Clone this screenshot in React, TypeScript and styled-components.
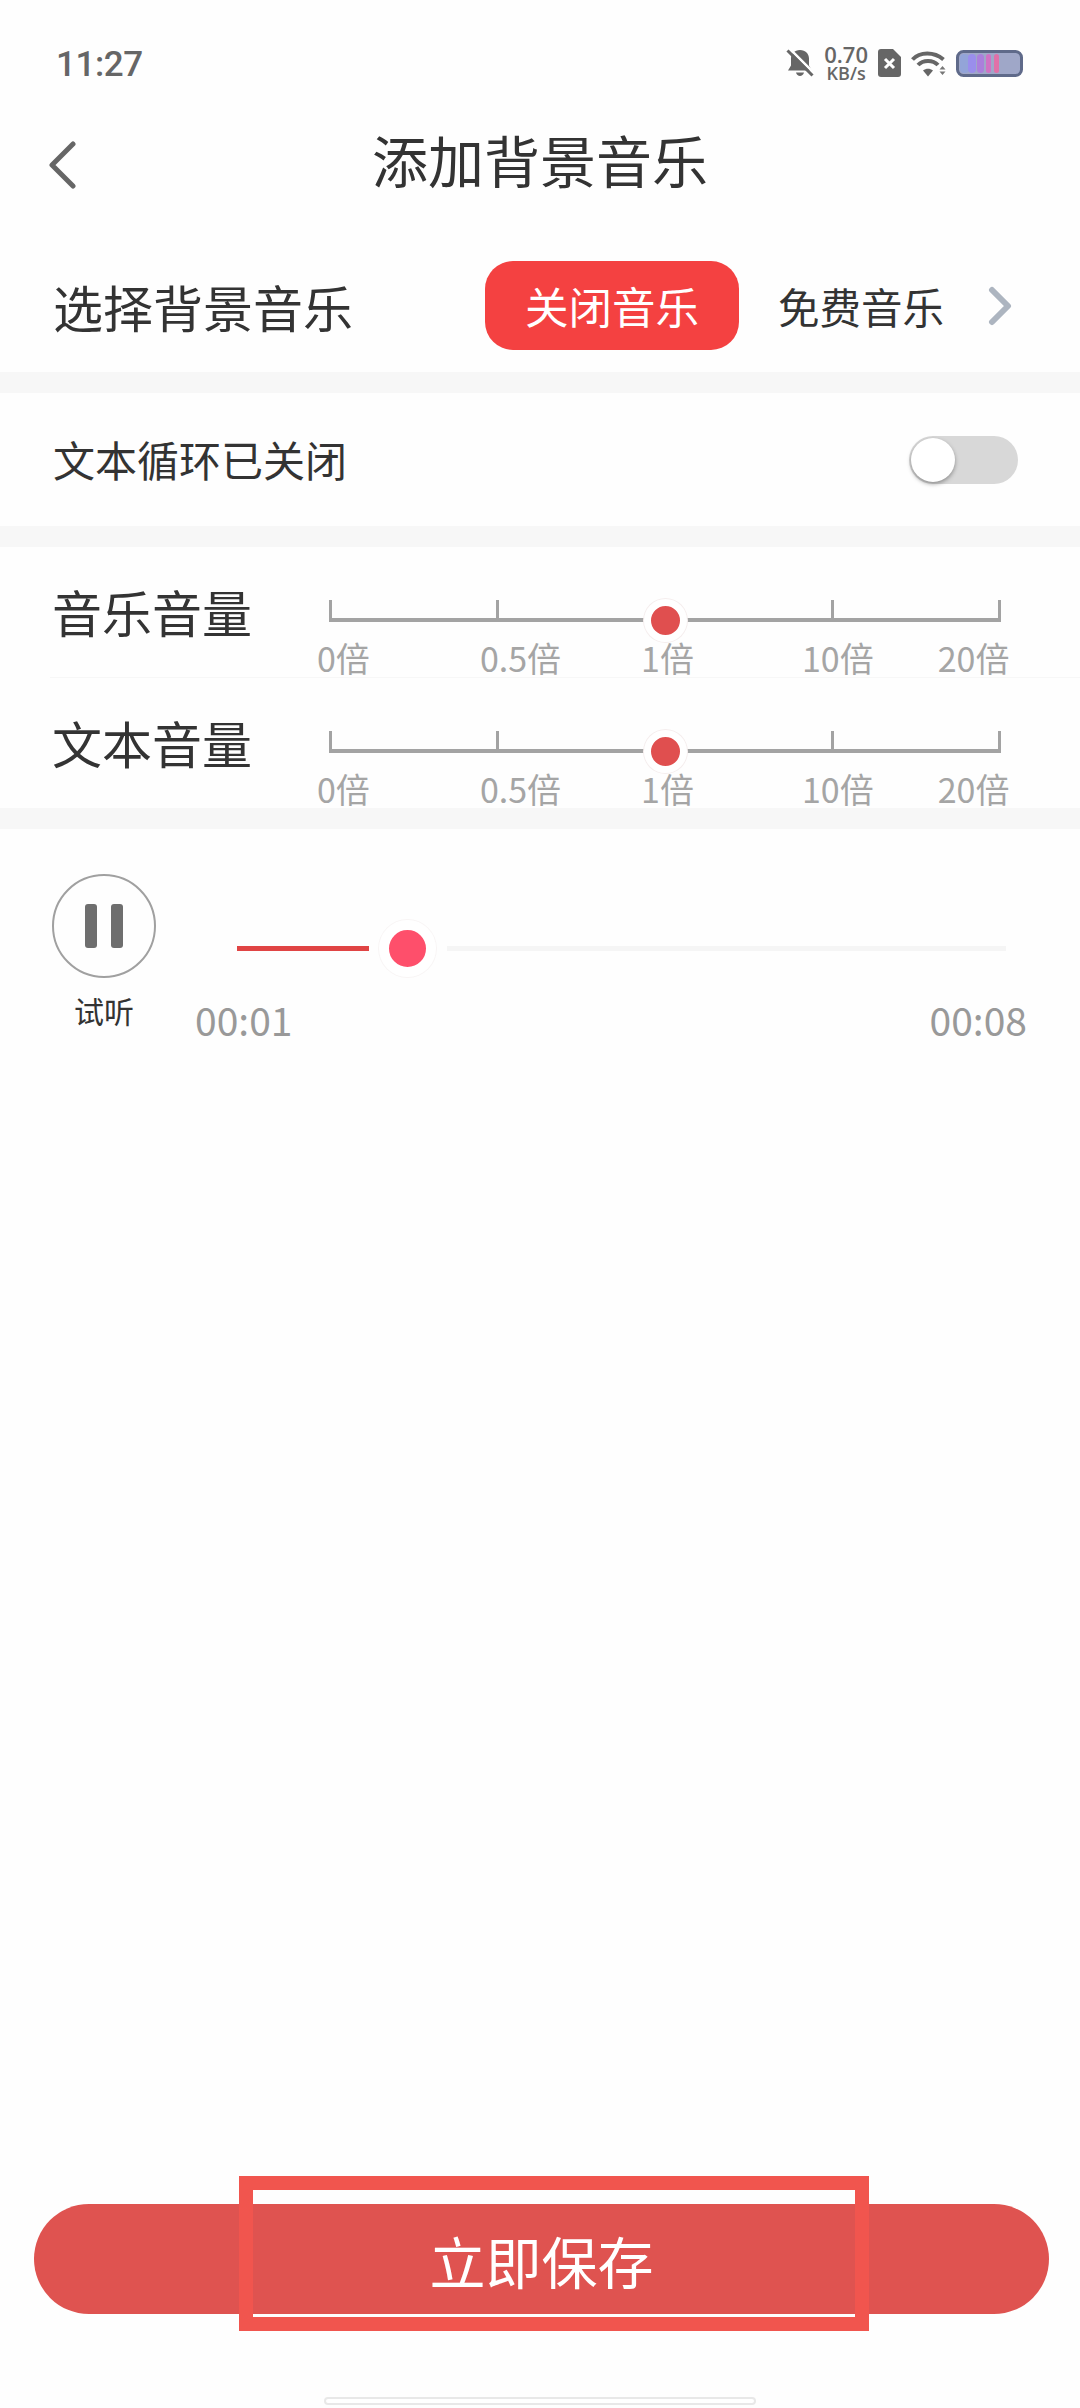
// App.tsx
import styled, { createGlobalStyle } from "styled-components";

const GlobalStyle = createGlobalStyle`
  html, body {
    margin: 0;
    padding: 0;
    background: #fefefe;
  }
  * {
    box-sizing: border-box;
  }
`;

const SCALE_LABELS = [
  { text: "0倍", gap: -1 },
  { text: "0.5倍", gap: 110 },
  { text: "1倍", gap: 80 },
  { text: "10倍", gap: 108 },
  { text: "20倍", gap: 64 },
];

const BellOff = () => (
  <svg width="28" height="28" viewBox="0 0 28 28">
    <path
      d="M14 1c5.500 0 9 3.800 9 8.500v7l3 5H2l3-5v-7C5 4.800 8.500 1 14 1zM10 23.500h8c-.5 2.200-2.200 3.500-4 3.500s-3.500-1.300-4-3.500z"
      fill="#666"
    />
    <path d="M3.500 -.5l25 25" stroke="#fff" strokeWidth="2.500" />
    <path d="M1.500 1.500l25 25" stroke="#666" strokeWidth="3" />
  </svg>
);

const SimOff = () => (
  <svg width="23" height="28" viewBox="0 0 23 28">
    <path
      d="M3 0h12l8 8v17a3 3 0 0 1-3 3H3a3 3 0 0 1-3-3V3a3 3 0 0 1 3-3z"
      fill="#666"
    />
    <path d="M7 10l9 9M16 10l-9 9" stroke="#fff" strokeWidth="3" />
  </svg>
);

const Wifi = () => (
  <svg width="35" height="27" viewBox="0 0 35 27" fill="none">
    <path d="M1.500 9.500C9 1.500 23 1.500 32.500 9.500" stroke="#666" strokeWidth="4" />
    <path d="M7 15C12 9.500 22 9.500 27 15" stroke="#666" strokeWidth="4" />
    <path d="M12 20.500c3-2.500 7-2.500 10 0l-5 6z" fill="#666" />
    <path d="M31.500 16l3 3.500h-6zM28.500 21.500h6l-3 3.500z" fill="#777" />
  </svg>
);

const Battery = () => (
  <svg width="67" height="27" viewBox="0 0 67 27">
    <rect x="1.500" y="1.500" width="64" height="24" rx="6" fill="#9fa7c8" />
    <rect x="4" y="4" width="9" height="19" rx="4" fill="#93a4d8" />
    <rect x="12" y="4" width="8" height="19" rx="4" fill="#9a8eec" />
    <rect x="21" y="4" width="7" height="19" rx="3.500" fill="#ab7fdc" />
    <rect x="30" y="4" width="5" height="19" rx="2.500" fill="#d072c4" />
    <rect x="38" y="4" width="5" height="19" rx="2.500" fill="#e070a8" />
    <rect
      x="1.500"
      y="1.500"
      width="64"
      height="24"
      rx="6"
      fill="none"
      stroke="#5f6a8a"
      strokeWidth="3"
    />
  </svg>
);

const Ruler = () => (
  <RulerTrack>
    <RulerSegment />
    <RulerSegment />
    <RulerSegment />
    <RulerSegment $last />
    <RulerThumb />
  </RulerTrack>
);

const VolumeRow = ({ title, divided }: { title: string; divided?: boolean }) => (
  <VolumeItem $divided={divided}>
    <VolumeTitle>{title}</VolumeTitle>
    <ScaleColumn>
      <Ruler />
      <ScaleLabels>
        {SCALE_LABELS.map((label) => (
          <ScaleLabel key={label.text} $gap={label.gap}>
            {label.text}
          </ScaleLabel>
        ))}
      </ScaleLabels>
    </ScaleColumn>
  </VolumeItem>
);

export default function App() {
  return (
    <Page>
      <GlobalStyle />
      <StatusBar>
        <Clock>11:27</Clock>
        <StatusIcons>
          <BellOff />
          <NetSpeed>
            <NetValue>0.70</NetValue>
            <NetUnit>KB/s</NetUnit>
          </NetSpeed>
          <SimOff />
          <Wifi />
          <Battery />
        </StatusIcons>
      </StatusBar>

      <Header>
        <BackButton>
          <svg width="28" height="48" viewBox="0 0 28 48" fill="none">
            <path
              d="M25 3L4 24l21 21"
              stroke="#666"
              strokeWidth="5"
              strokeLinecap="round"
              strokeLinejoin="round"
            />
          </svg>
        </BackButton>
        <Title>添加背景音乐</Title>
      </Header>

      <MusicRow>
        <SectionLabel>选择背景音乐</SectionLabel>
        <MusicTabs>
          <ActiveTab>关闭音乐</ActiveTab>
          <Tab>免费音乐</Tab>
          <svg width="24" height="40" viewBox="0 0 24 40" fill="none">
            <path
              d="M4 4l16 16L4 36"
              stroke="#adb5c0"
              strokeWidth="6"
              strokeLinecap="round"
              strokeLinejoin="round"
            />
          </svg>
        </MusicTabs>
      </MusicRow>
      <Band />

      <LoopRow>
        <LoopLabel>文本循环已关闭</LoopLabel>
        <Switch>
          <SwitchKnob />
        </Switch>
      </LoopRow>
      <Band />

      <VolumeRow title="音乐音量" divided />
      <VolumeRow title="文本音量" />
      <Band />

      <Preview>
        <PreviewTop>
          <PlayColumn>
            <PlayCircle>
              <PauseBar />
              <PauseBar />
            </PlayCircle>
            <PlayLabel>试听</PlayLabel>
          </PlayColumn>
          <ProgressColumn>
            <ProgressTrack>
              <ProgressFill />
              <ProgressThumb />
              <ProgressRest />
            </ProgressTrack>
            <TimeRow>
              <TimeText>00:01</TimeText>
              <TimeText>00:08</TimeText>
            </TimeRow>
          </ProgressColumn>
        </PreviewTop>
      </Preview>

      <Footer>
        <SaveButton>立即保存</SaveButton>
        <Highlight />
      </Footer>
      <HomeBarRow>
        <HomeBar />
      </HomeBarRow>
    </Page>
  );
}

const Page = styled.div`
  width: 1080px;
  height: 2408px;
  display: flex;
  flex-direction: column;
  overflow: hidden;
  background: #fefefe;
  color: #333;
  font-family: "Noto Sans CJK SC", "Noto Sans", sans-serif;
`;

const StatusBar = styled.div`
  height: 126px;
  padding: 0 57px 0 56px;
  display: flex;
  align-items: center;
  justify-content: space-between;
`;

const Clock = styled.div`
  font-family: Roboto, sans-serif;
  font-size: 35px;
  letter-spacing: -0.4px;
  font-weight: 500;
  color: #666;
  margin-top: 2px;
`;

const StatusIcons = styled.div`
  display: flex;
  align-items: center;
  gap: 10px;
`;

const NetSpeed = styled.div`
  display: flex;
  flex-direction: column;
  align-items: center;
  font-family: "Open Sans", sans-serif;
  font-weight: 600;
  color: #666;
`;

const NetValue = styled.span`
  font-size: 22px;
  line-height: 20px;
`;

const NetUnit = styled.span`
  font-size: 18px;
  line-height: 19px;
`;

const Header = styled.div`
  height: 78px;
  padding-bottom: 14px;
  display: flex;
  align-items: center;
  justify-content: center;
  position: relative;
`;

const BackButton = styled.div`
  position: absolute;
  left: 48px;
  top: 15px;
  display: flex;
`;

const Title = styled.h1`
  margin: 0;
  font-size: 56px;
  font-weight: 400;
  color: #333;
`;

const MusicRow = styled.div`
  height: 168px;
  padding: 57px 68px 22px 53px;
  display: flex;
  align-items: center;
  justify-content: space-between;
`;

const SectionLabel = styled.div`
  font-size: 50px;
  line-height: 1;
`;

const MusicTabs = styled.div`
  display: flex;
  align-items: center;
`;

const ActiveTab = styled.div`
  width: 254px;
  height: 89px;
  border-radius: 28px;
  background: #f44141;
  color: #fff;
  font-size: 43.5px;
  display: flex;
  align-items: center;
  justify-content: center;
`;

const Tab = styled.div`
  margin: 0 44px 0 39px;
  font-size: 41.5px;
  color: #333;
`;

const Band = styled.div`
  height: 21px;
  flex: none;
  background: #f7f7f7;
`;

const LoopRow = styled.div`
  height: 133px;
  padding: 0 62px 2px 53px;
  display: flex;
  align-items: center;
  justify-content: space-between;
`;

const LoopLabel = styled.div`
  font-size: 42px;
`;

const Switch = styled.div`
  width: 109px;
  height: 48px;
  border-radius: 24px;
  background: #d8d8d8;
  display: flex;
  align-items: center;
  padding-left: 2px;
  margin-top: 3px;
`;

const SwitchKnob = styled.div`
  width: 44px;
  height: 44px;
  border-radius: 50%;
  background: #fff;
  box-shadow: 0 2px 4px rgba(0, 0, 0, 0.35);
`;

const VolumeItem = styled.div<{ $divided?: boolean }>`
  height: ${(p) => (p.$divided ? 131 : 130)}px;
  margin-left: ${(p) => (p.$divided ? 50 : 0)}px;
  padding-left: ${(p) => (p.$divided ? 2 : 52)}px;
  display: flex;
  border-bottom: ${(p) => (p.$divided ? "1px solid #f7f7f7" : "none")};
`;

const VolumeTitle = styled.div`
  width: 266px;
  padding-top: 39px;
  font-size: 50px;
  line-height: 50px;
  color: #333;
`;

const ScaleColumn = styled.div`
  flex: 1;
  padding-top: 53px;
`;

const RulerTrack = styled.div`
  position: relative;
  display: flex;
  width: 672px;
  margin-left: 11px;
  height: 22px;
`;

const RulerSegment = styled.div<{ $last?: boolean }>`
  flex: 1;
  border-left: 3px solid #a3a3a3;
  border-bottom: 4px solid #a3a3a3;
  border-right: ${(p) => (p.$last ? "3px solid #a3a3a3" : "none")};
`;

const RulerThumb = styled.div`
  position: absolute;
  left: 336px;
  top: 20px;
  width: 43px;
  height: 43px;
  margin: -21.5px 0 0 -21.5px;
  border-radius: 50%;
  background: #e04f4f;
  border: 7.5px solid #fff;
  box-shadow: 0 0 0 1px #f5eeee;
`;

const ScaleLabels = styled.div`
  display: flex;
  margin-top: 16px;
`;

const ScaleLabel = styled.span<{ $gap: number }>`
  margin-left: ${(p) => p.$gap}px;
  font-size: 34px;
  line-height: 40px;
  color: #a5a5a5;
  white-space: nowrap;
`;

const Preview = styled.div`
  flex: 1;
  padding: 45px 52px 0;
`;

const PreviewTop = styled.div`
  display: flex;
`;

const PlayColumn = styled.div`
  width: 104px;
  display: flex;
  flex-direction: column;
  align-items: center;
`;

const PlayCircle = styled.div`
  width: 104px;
  height: 104px;
  border-radius: 50%;
  border: 2px solid #a0a0a0;
  display: flex;
  align-items: center;
  justify-content: center;
  gap: 14px;
`;

const PauseBar = styled.div`
  width: 12px;
  height: 44px;
  border-radius: 3px;
  background: #6e6e6e;
`;

const PlayLabel = styled.div`
  margin-top: 14px;
  font-size: 30px;
  line-height: 36px;
  color: #333;
`;

const ProgressColumn = styled.div`
  margin-left: 39px;
  width: 832px;
`;

const ProgressTrack = styled.div`
  height: 57px;
  margin: 46px 0 0 42px;
  display: flex;
  align-items: center;
`;

const ProgressFill = styled.div`
  width: 132px;
  height: 5px;
  background: #e04444;
`;

const ProgressThumb = styled.div`
  width: 57px;
  height: 57px;
  margin: 0 11px 0 10px;
  border-radius: 50%;
  background: #fe4f6b;
  border: 10px solid #fff;
  box-shadow: 0 0 0 1px #f8f5f5;
`;

const ProgressRest = styled.div`
  width: 559px;
  height: 5px;
  background: #f5f5f5;
`;

const TimeRow = styled.div`
  display: flex;
  justify-content: space-between;
  margin-top: 20px;
`;

const TimeText = styled.span`
  font-size: 39px;
  line-height: 44px;
  color: #999;
`;

const Footer = styled.div`
  position: relative;
  margin: 0 31px 83px 34px;
`;

const SaveButton = styled.div`
  height: 110px;
  border-radius: 55px;
  background: #df5350;
  color: #fff;
  font-size: 56px;
  display: flex;
  align-items: center;
  justify-content: center;
`;

const Highlight = styled.div`
  position: absolute;
  left: 205px;
  top: -28px;
  width: 630px;
  height: 155px;
  border: 14px solid #f1554e;
`;

const HomeBarRow = styled.div`
  height: 11px;
  display: flex;
  justify-content: center;
`;

const HomeBar = styled.div`
  width: 432px;
  height: 8px;
  border: 2px solid #e8e8e8;
  border-radius: 4px;
  background: #fff;
`;
